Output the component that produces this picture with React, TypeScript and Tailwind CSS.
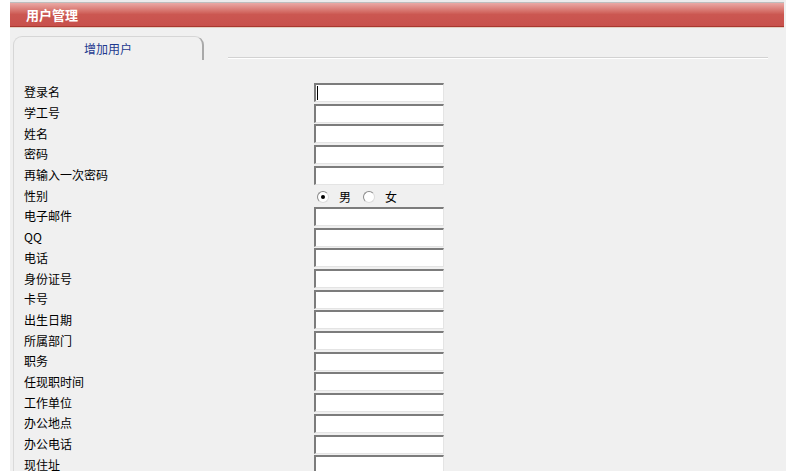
import React from 'react';

const fields = [
  '登录名',
  '学工号',
  '姓名',
  '密码',
  '再输入一次密码',
  '性别',
  '电子邮件',
  'QQ',
  '电话',
  '身份证号',
  '卡号',
  '出生日期',
  '所属部门',
  '职务',
  '任现职时间',
  '工作单位',
  '办公地点',
  '办公电话',
  '现住址',
];

const Box: React.FC<{ caret?: boolean }> = ({ caret }) => (
  <div className="w-[130px] h-[19px] bg-white border-t-2 border-l-2 border-t-[#7c7c7c] border-l-[#7c7c7c] border-b border-r border-b-[#e4e4e4] border-r-[#e4e4e4] flex items-center">
    {caret && <span className="ml-[1px] w-[1px] h-[14px] bg-black" />}
  </div>
);

const Radio: React.FC<{ checked?: boolean }> = ({ checked }) => (
  <span className="w-[12px] h-[12px] rounded-full bg-white border border-t-[#8a8a8a] border-l-[#8a8a8a] border-r-[#dcdcdc] border-b-[#dcdcdc] flex items-center justify-center">
    {checked && <span className="w-[4px] h-[4px] rounded-full bg-black" />}
  </span>
);

export default function App() {
  return (
    <div
      className="min-h-screen bg-white pl-[10px] text-[12px] text-black"
      style={{ fontFamily: '"Noto Sans CJK SC", "Liberation Sans", sans-serif' }}
    >
      <div className="min-h-screen bg-[#f0f0f0]">
        {/* 标题栏 */}
        <div className="mr-[2px]">
          <div className="h-[2px] bg-[#ececec]" />
          <div className="h-[1px] bg-[#bdbdbd]" />
          <div className="h-[24px] bg-gradient-to-b from-[#eaa9a5] via-[#cb5751] to-[#c8514c] border-b border-[#a9382f] flex items-center pl-[16px]">
            <span className="text-white font-bold text-[13px] leading-none">用户管理</span>
          </div>
          <div className="h-[1px] bg-[#e3cfc3]" />
        </div>

        {/* 选项卡 */}
        <div className="mt-[8px] ml-[3px] flex items-end">
          <div className="w-[191px] h-[24px] rounded-tr-[9px] rounded-tl-[9px] border-t border-l border-[#d6d6d6] border-r-2 border-r-[#a9a9a9] flex items-center justify-center text-[#1d3a8f]">
            增加用户
          </div>
          <div className="ml-[24px] mb-[1px] w-[540px] h-[2px] border-t border-[#d2d2d2] bg-white" />
        </div>

        {/* 表单 */}
        <div className="ml-[3px] border-l border-[#dadada] pt-[22px] pl-[10px]">
          {fields.map((label, i) => (
            <div key={label} className="h-[20.7px] flex items-center">
              <div className="w-[290px] leading-none">{label}</div>
              {label === '性别' ? (
                <div className="flex items-center pl-[3px] pt-[3px]">
                  <Radio checked />
                  <span className="ml-[10px]">男</span>
                  <span className="ml-[12px]">
                    <Radio />
                  </span>
                  <span className="ml-[10px]">女</span>
                </div>
              ) : (
                <Box caret={i === 0} />
              )}
            </div>
          ))}
        </div>
      </div>
    </div>
  );
}
